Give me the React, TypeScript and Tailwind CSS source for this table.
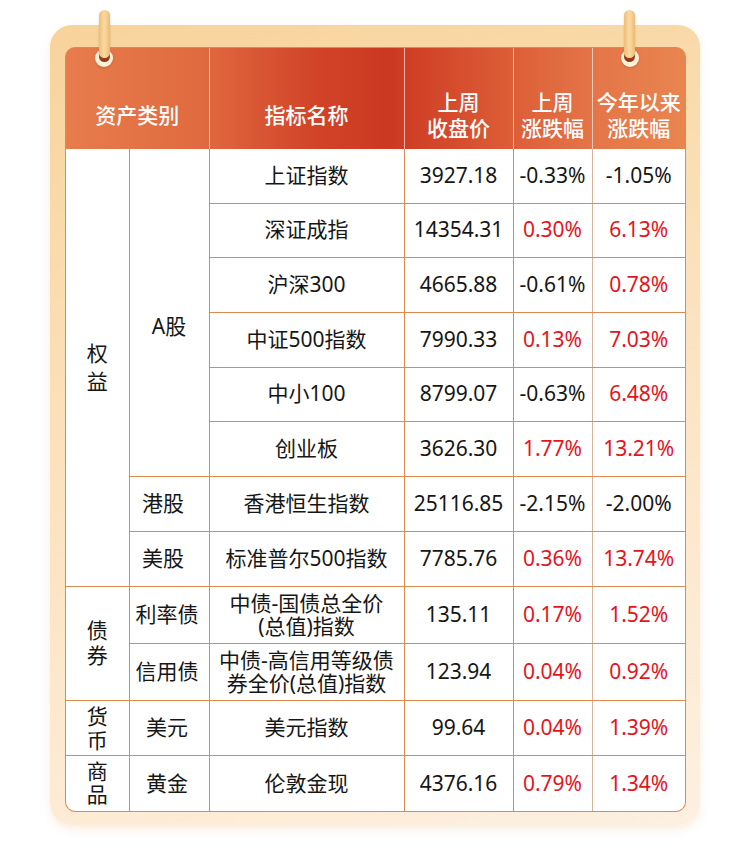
import React from "react";

type Row = {
  name: React.ReactNode;
  price: string;
  wk: string;
  ytd: string;
  h: string;
};

const isRed = (v: string) => !v.startsWith("-");

const cell =
  "border-b border-l border-[#dc8a4d] bg-white p-0 text-center align-middle whitespace-nowrap";

function Pin({ left }: { left: number }) {
  return (
    <>
      <div
        className="absolute top-[24px] z-10 flex h-[18px] w-[18px] items-start justify-center rounded-full bg-[#fdf0d9] pt-[2px] shadow-[0_1px_2px_rgba(150,60,20,0.35)]"
        style={{ left: left - 9 }}
      >
        <div className="h-[11px] w-[11px] rounded-full bg-[#93391a]" />
      </div>
      <div
        className="absolute top-[-15px] z-20 h-[48px] w-[11px] rounded-full bg-[linear-gradient(90deg,#eebd76_0%,#fad9a2_45%,#f6cf92_70%,#eab873_100%)] shadow-[0_1px_2px_rgba(160,100,40,0.3)]"
        style={{ left: left - 5.5 }}
      />
    </>
  );
}

function Val({ v }: { v: string }) {
  return <span className={isRed(v) ? "text-[#e5131c]" : "text-[#161616]"}>{v}</span>;
}

export default function App() {
  return (
    <div className="h-[866px] w-[750px] bg-white font-['Noto_Sans','Noto_Sans_CJK_SC',sans-serif] text-[21px] text-[#161616]">
      <div className="pl-[50px] pt-[25px]">
        <div className="relative w-[650px] rounded-[22px] bg-[linear-gradient(165deg,#f8d39b_0%,#fbe2bd_45%,#fdf0e1_100%)] pb-[13px] pl-[15px] pr-[14px] pt-[22px] shadow-[0_4px_10px_rgba(235,195,145,0.3)]">
          <Pin left={54} />
          <Pin left={579.5} />
          <div className="overflow-hidden rounded-[10px] border border-[#dc8a4d] bg-[linear-gradient(90deg,#e77c4c_0%,#e06a3f_22%,#d14428_40%,#cc3822_52%,#db5a34_70%,#e47548_85%,#e9854f_100%)]">
            <table className="w-full table-fixed border-collapse border-hidden">
              <colgroup>
                <col className="w-[63px]" />
                <col className="w-[80px]" />
                <col className="w-[195px]" />
                <col className="w-[109px]" />
                <col className="w-[79px]" />
                <col />
              </colgroup>
              <thead>
                <tr className="h-[101px]">
                  <th
                    colSpan={2}
                    className="border-l border-white/60 p-0 pt-[32px] text-center align-middle text-[21px] font-medium leading-[26px] text-white"
                  >
                    资产类别
                  </th>
                  <th className="border-l border-white/60 p-0 pt-[32px] text-center align-middle text-[21px] font-medium leading-[26px] text-white">
                    指标名称
                  </th>
                  <th className="border-l border-white/60 p-0 pt-[32px] text-center align-middle text-[21px] font-medium leading-[26px] text-white">
                    上周
                    <br />
                    收盘价
                  </th>
                  <th className="border-l border-white/60 p-0 pt-[32px] text-center align-middle text-[21px] font-medium leading-[26px] text-white">
                    上周
                    <br />
                    涨跌幅
                  </th>
                  <th className="whitespace-nowrap border-l border-white/60 p-0 pt-[32px] text-center align-middle text-[21px] font-medium leading-[26px] text-white">
                    今年以来
                    <br />
                    涨跌幅
                  </th>
                </tr>
              </thead>
              <tbody>
                <tr className="h-[54px]">
                  <td rowSpan={8} className={`${cell} leading-[28px]`}>
                    权<br />益
                  </td>
                  <td rowSpan={6} className={`${cell} pt-[28px]`}>
                    A股
                  </td>
                  <td className={cell}>上证指数</td>
                  <td className={cell}>3927.18</td>
                  <td className={cell}><Val v="-0.33%" /></td>
                  <td className={`${cell} border-l-[#d5b59a]`}><Val v="-1.05%" /></td>
                </tr>
                <tr className="h-[54px]">
                  <td className={cell}>深证成指</td>
                  <td className={cell}>14354.31</td>
                  <td className={cell}><Val v="0.30%" /></td>
                  <td className={`${cell} border-l-[#d5b59a]`}><Val v="6.13%" /></td>
                </tr>
                <tr className="h-[55px]">
                  <td className={cell}>沪深300</td>
                  <td className={cell}>4665.88</td>
                  <td className={cell}><Val v="-0.61%" /></td>
                  <td className={`${cell} border-l-[#d5b59a]`}><Val v="0.78%" /></td>
                </tr>
                <tr className="h-[55px]">
                  <td className={cell}>中证500指数</td>
                  <td className={cell}>7990.33</td>
                  <td className={cell}><Val v="0.13%" /></td>
                  <td className={`${cell} border-l-[#d5b59a]`}><Val v="7.03%" /></td>
                </tr>
                <tr className="h-[54px]">
                  <td className={cell}>中小100</td>
                  <td className={cell}>8799.07</td>
                  <td className={cell}><Val v="-0.63%" /></td>
                  <td className={`${cell} border-l-[#d5b59a]`}><Val v="6.48%" /></td>
                </tr>
                <tr className="h-[55px]">
                  <td className={cell}>创业板</td>
                  <td className={cell}>3626.30</td>
                  <td className={cell}><Val v="1.77%" /></td>
                  <td className={`${cell} border-l-[#d5b59a]`}><Val v="13.21%" /></td>
                </tr>
                <tr className="h-[55px]">
                  <td className={`${cell} pr-[12px]`}>港股</td>
                  <td className={cell}>香港恒生指数</td>
                  <td className={cell}>25116.85</td>
                  <td className={cell}><Val v="-2.15%" /></td>
                  <td className={`${cell} border-l-[#d5b59a]`}><Val v="-2.00%" /></td>
                </tr>
                <tr className="h-[55px]">
                  <td className={`${cell} pr-[12px]`}>美股</td>
                  <td className={cell}>标准普尔500指数</td>
                  <td className={cell}>7785.76</td>
                  <td className={cell}><Val v="0.36%" /></td>
                  <td className={`${cell} border-l-[#d5b59a]`}><Val v="13.74%" /></td>
                </tr>
                <tr className="h-[57px]">
                  <td rowSpan={2} className={`${cell} leading-[25px]`}>
                    债<br />券
                  </td>
                  <td className={`${cell} pr-[4px]`}>利率债</td>
                  <td className={`${cell} leading-[23px]`}>
                    中债-国债总全价
                    <br />
                    (总值)指数
                  </td>
                  <td className={cell}>135.11</td>
                  <td className={cell}><Val v="0.17%" /></td>
                  <td className={`${cell} border-l-[#d5b59a]`}><Val v="1.52%" /></td>
                </tr>
                <tr className="h-[57px]">
                  <td className={`${cell} pr-[4px]`}>信用债</td>
                  <td className={`${cell} leading-[23px]`}>
                    中债-高信用等级债
                    <br />
                    券全价(总值)指数
                  </td>
                  <td className={cell}>123.94</td>
                  <td className={cell}><Val v="0.04%" /></td>
                  <td className={`${cell} border-l-[#d5b59a]`}><Val v="0.92%" /></td>
                </tr>
                <tr className="h-[55px]">
                  <td className={`${cell} leading-[24px]`}>
                    货<br />币
                  </td>
                  <td className={`${cell} pr-[4px]`}>美元</td>
                  <td className={cell}>美元指数</td>
                  <td className={cell}>99.64</td>
                  <td className={cell}><Val v="0.04%" /></td>
                  <td className={`${cell} border-l-[#d5b59a]`}><Val v="1.39%" /></td>
                </tr>
                <tr className="h-[56px]">
                  <td className={`${cell} leading-[23px]`}>
                    商<br />品
                  </td>
                  <td className={`${cell} pr-[4px]`}>黄金</td>
                  <td className={cell}>伦敦金现</td>
                  <td className={cell}>4376.16</td>
                  <td className={cell}><Val v="0.79%" /></td>
                  <td className={`${cell} border-l-[#d5b59a]`}><Val v="1.34%" /></td>
                </tr>
              </tbody>
            </table>
          </div>
        </div>
      </div>
    </div>
  );
}
